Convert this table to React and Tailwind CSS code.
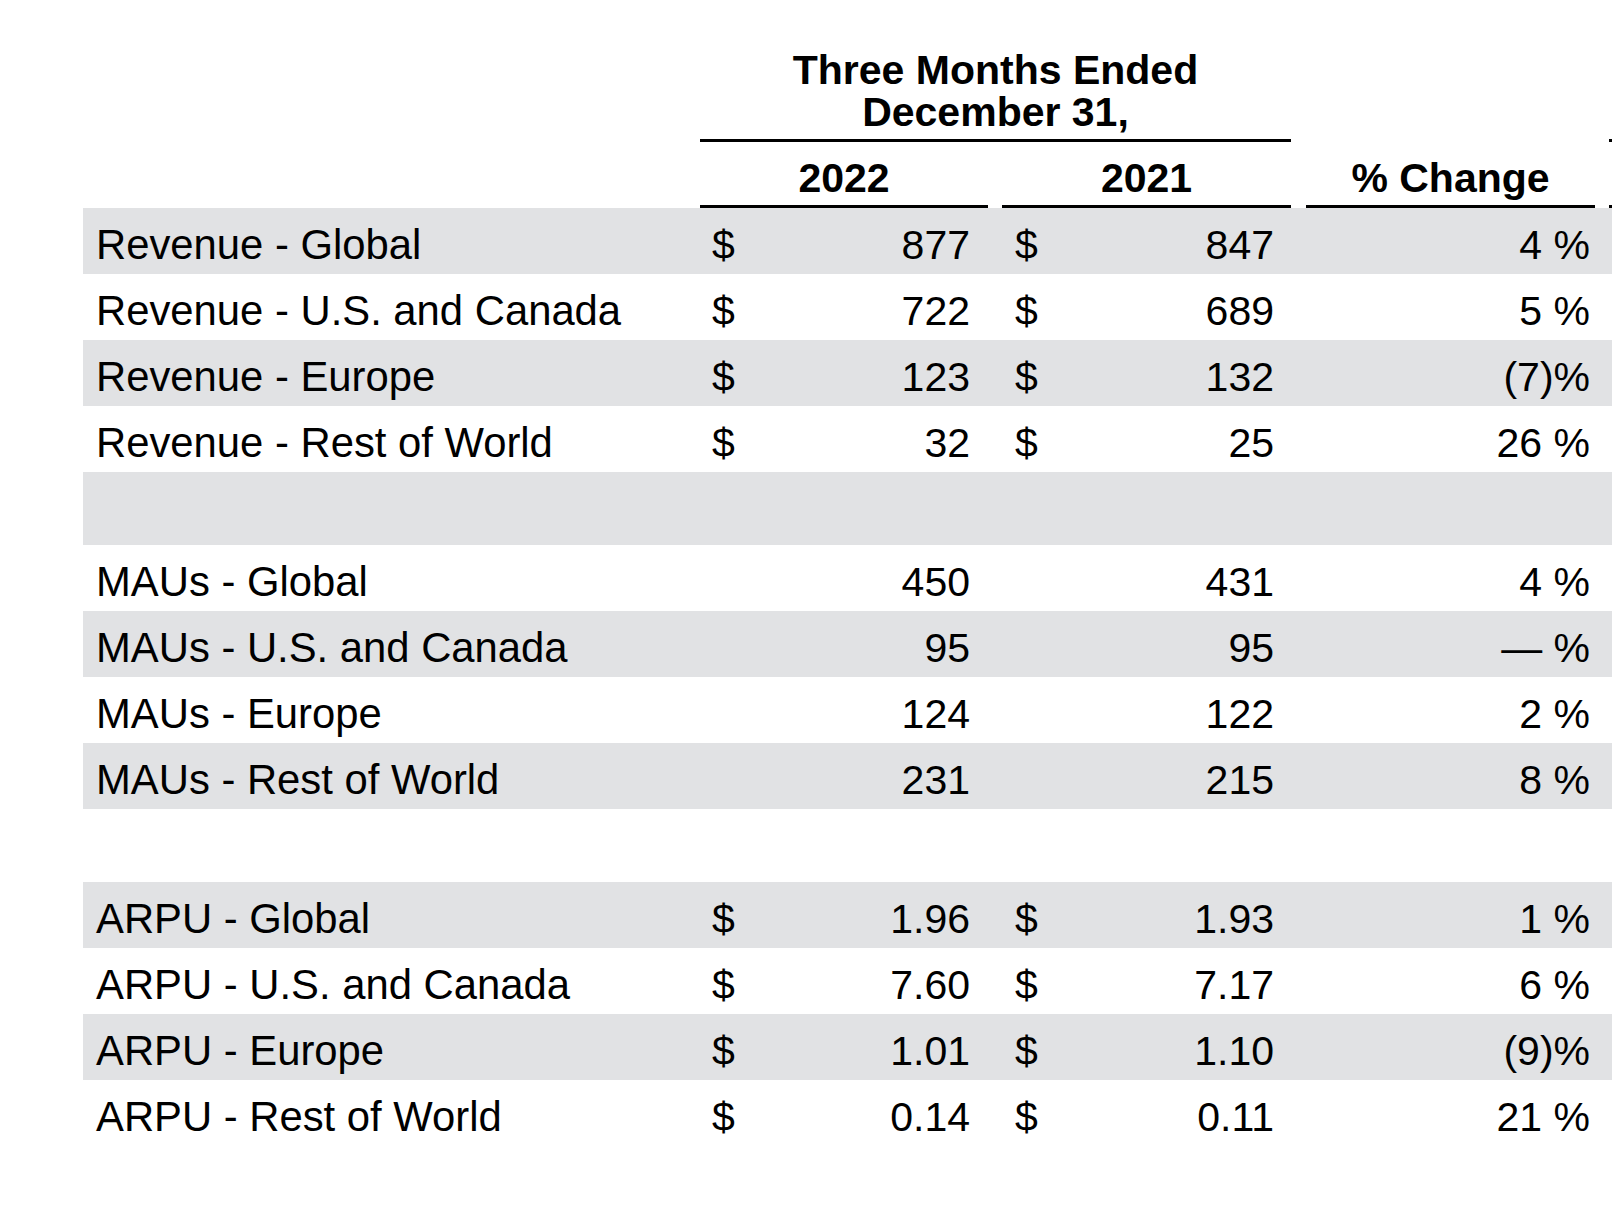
const rows = [
  { label: "Revenue - Global", usd: true, y22: "877", y21: "847", pct: "4 %" },
  { label: "Revenue - U.S. and Canada", usd: true, y22: "722", y21: "689", pct: "5 %" },
  { label: "Revenue - Europe", usd: true, y22: "123", y21: "132", pct: "(7)%" },
  { label: "Revenue - Rest of World", usd: true, y22: "32", y21: "25", pct: "26 %" },
  null,
  { label: "MAUs - Global", usd: false, y22: "450", y21: "431", pct: "4 %" },
  { label: "MAUs - U.S. and Canada", usd: false, y22: "95", y21: "95", pct: "— %" },
  { label: "MAUs - Europe", usd: false, y22: "124", y21: "122", pct: "2 %" },
  { label: "MAUs - Rest of World", usd: false, y22: "231", y21: "215", pct: "8 %" },
  null,
  { label: "ARPU - Global", usd: true, y22: "1.96", y21: "1.93", pct: "1 %" },
  { label: "ARPU - U.S. and Canada", usd: true, y22: "7.60", y21: "7.17", pct: "6 %" },
  { label: "ARPU - Europe", usd: true, y22: "1.01", y21: "1.10", pct: "(9)%" },
  { label: "ARPU - Rest of World", usd: true, y22: "0.14", y21: "0.11", pct: "21 %" },
];

function Rule() {
  return <div className="h-[3px] bg-black" />;
}

function YearHead({ children, width }) {
  return (
    <div className={`${width} shrink-0`}>
      <div className="text-center font-bold text-[41px] leading-[42px]">{children}</div>
      <div className="mt-[6px]">
        <Rule />
      </div>
    </div>
  );
}

function Row({ row, idx }) {
  const shade = idx % 2 === 0 ? "bg-[#e1e2e4]" : "bg-white";
  if (!row) return <div className={`h-[73px] ${shade}`} />;
  return (
    <div className={`flex h-[66px] pt-[15px] leading-[44px] ${shade}`}>
      <div className="w-[617px] shrink-0 pl-[13px] text-[41.8px]">{row.label}</div>
      <div className="w-[288px] shrink-0 flex justify-between pl-[12px] pr-[18px] text-[41px]">
        <span>{row.usd ? "$" : ""}</span>
        <span>{row.y22}</span>
      </div>
      <div className="w-[14px] shrink-0" />
      <div className="w-[289px] shrink-0 flex justify-between pl-[13px] pr-[17px] text-[41px]">
        <span>{row.usd ? "$" : ""}</span>
        <span>{row.y21}</span>
      </div>
      <div className="w-[15px] shrink-0" />
      <div className="w-[289px] shrink-0 text-right pr-[5px] text-[41px] whitespace-pre">{row.pct}</div>
    </div>
  );
}

export default function App() {
  return (
    <div
      className="w-[1612px] h-[1218px] overflow-hidden bg-white text-black pl-[83px]"
      style={{ fontFamily: '"Liberation Sans", Arial, Helvetica, sans-serif' }}
    >
      <div className="w-[1600px]">
        {/* group header */}
        <div className="flex pt-[49px]">
          <div className="w-[617px] shrink-0" />
          <div className="w-[591px] shrink-0">
            <div className="text-center font-bold text-[41px] leading-[42px]">
              Three Months Ended
              <br />
              December 31,
            </div>
            <div className="mt-[6px]">
              <Rule />
            </div>
          </div>
          <div className="w-[318px] shrink-0" />
          <div className="w-[289px] shrink-0 flex flex-col justify-end">
            <Rule />
          </div>
        </div>

        {/* year header */}
        <div className="flex mt-[15px]">
          <div className="w-[617px] shrink-0" />
          <YearHead width="w-[288px]">2022</YearHead>
          <div className="w-[14px] shrink-0" />
          <YearHead width="w-[289px]">2021</YearHead>
          <div className="w-[15px] shrink-0" />
          <YearHead width="w-[289px]">% Change</YearHead>
          <div className="w-[14px] shrink-0" />
          <YearHead width="w-[289px]">{"\u00a0"}</YearHead>
        </div>

        {/* body */}
        <div>
          {rows.map((r, i) => (
            <Row key={i} row={r} idx={i} />
          ))}
        </div>
      </div>
    </div>
  );
}
